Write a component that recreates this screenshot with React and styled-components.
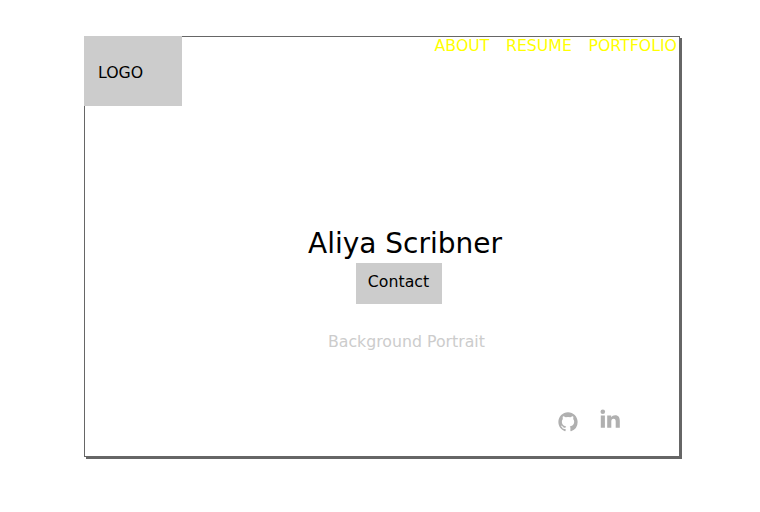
import React from 'react';
import styled, { createGlobalStyle } from 'styled-components';

const GlobalStyle = createGlobalStyle`
  * { box-sizing: border-box; }
  body { margin: 0; background: #fff; font-family: "DejaVu Sans", sans-serif; color: #000; }
`;
const Page = styled.div`
  width: 760px;
  height: 512px;
  padding: 36px 0 0 84px;
`;
const Frame = styled.main`
  display: flex;
  flex-direction: column;
  width: 596px;
  height: 421px;
  border: 1px solid #666;
  box-shadow: 2px 2px 0 #666;
`;
const Header = styled.header`
  display: flex;
  justify-content: space-between;
  align-items: flex-start;
  height: 69px;
`;
const Logo = styled.div`
  width: 98px;
  height: 70px;
  margin: -1px 0 0 -1px;
  padding: 27px 0 0 14px;
  background: #ccc;
  font-size: 15.75px;
  line-height: 20px;
`;
const Nav = styled.nav`
  display: flex;
  gap: 16.5px;
  margin-right: 2px;
  font-size: 15.75px;
  line-height: 17px;
  color: #ff0;
`;
const Hero = styled.section`
  display: flex;
  flex-direction: column;
  align-items: flex-start;
  padding: 119px 0 0 223px;
`;
const Name = styled.h1`
  margin: 0;
  font-size: 28px;
  font-weight: 400;
  line-height: 37px;
  white-space: nowrap;
`;
const Contact = styled.button`
  width: 86px;
  height: 41px;
  margin: 1px 0 0 48px;
  padding: 0 1px 4px 0;
  border: 0;
  background: #ccc;
  color: #000;
  font: 15.75px "DejaVu Sans", sans-serif;
`;
const Caption = styled.p`
  margin: 28px 0 0 20px;
  font-size: 15.75px;
  line-height: 20px;
  color: #ccc;
  white-space: nowrap;
`;
const Social = styled.footer`
  display: flex;
  gap: 22px;
  margin: 57px 0 0 473px;
`;
const Icon = styled.svg`
  width: 20px;
  height: 20px;
  margin-top: ${(p) => p.$drop}px;
  fill: #b0b0b0;
`;

export default function App() {
  return (
    <Page>
      <GlobalStyle />
      <Frame>
        <Header>
          <Logo>LOGO</Logo>
          <Nav><span>ABOUT</span><span>RESUME</span><span>PORTFOLIO</span></Nav>
        </Header>
        <Hero>
          <Name>Aliya Scribner</Name>
          <Contact>Contact</Contact>
          <Caption>Background Portrait</Caption>
        </Hero>
        <Social>
          <Icon $drop={3} viewBox="-0.3 -0.3 16.6 16.6"><path d="M8 0C3.58 0 0 3.58 0 8c0 3.54 2.29 6.53 5.47 7.59.4.07.55-.17.55-.38 0-.19-.01-.82-.01-1.49-2.01.37-2.53-.49-2.69-.94-.09-.23-.48-.94-.82-1.13-.28-.15-.68-.52-.01-.53.63-.01 1.08.58 1.23.82.72 1.21 1.87.87 2.33.66.07-.52.28-.87.51-1.07-1.78-.2-3.64-.89-3.64-3.95 0-.87.31-1.59.82-2.15-.08-.2-.36-1.02.08-2.12 0 0 .67-.21 2.2.82a7.6 7.6 0 0 1 4 0c1.53-1.04 2.2-.82 2.2-.82.44 1.1.16 1.92.08 2.12.51.56.82 1.27.82 2.15 0 3.07-1.87 3.75-3.65 3.95.29.25.54.73.54 1.48 0 1.07-.01 1.93-.01 2.2 0 .21.15.46.55.38A8 8 0 0 0 16 8c0-4.42-3.58-8-8-8z" /></Icon>
          <Icon $drop={0} viewBox="0 0 20 20"><circle cx="2.8" cy="2.7" r="2.3" /><path d="M.8 6.5h4.1v12.2H.8zM7.2 6.5h4v1.7c.8-1.3 2.1-2 3.9-2 3.6 0 4.7 2.2 4.7 5.8v6.7h-4.1v-6c0-1.8-.5-3-2.1-3-1.7 0-2.3 1.2-2.3 3v6H7.2z" /></Icon>
        </Social>
      </Frame>
    </Page>
  );
}
